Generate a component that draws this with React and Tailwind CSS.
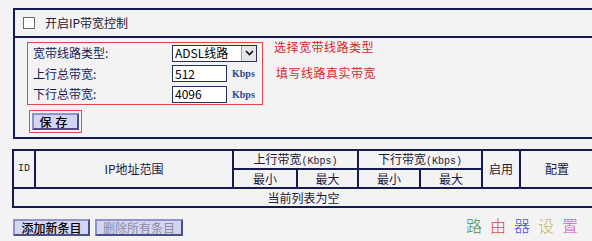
import { useState } from "react";

const cjk = "font-['SimSun','Noto_Sans_CJK_SC',sans-serif]";

function LavButton({ children, disabled, className = "" }) {
	return (
		<button
			type="button"
			className={ `h-[17px] px-[4px] flex items-center justify-center bg-[#d3d5f5] border-2 border-t-[#8f93c9] border-l-[#8f93c9] border-r-[#4b4f86] border-b-[#4b4f86] text-[12px] leading-none ${ disabled ? "text-[#8c8c9c]" : "text-black font-medium" } ${ className }` }
		>
			{ children }
		</button>
	);
}

function Kbps() {
	return <span className="ml-[5px] font-['Liberation_Serif',serif] font-bold text-[10px] text-[#2d4a8a]">Kbps</span>;
}

export default function App() {
	const [ enabled, setEnabled ] = useState(false);
	const [ up, setUp ] = useState("512");
	const [ down, setDown ] = useState("4096");

	const th = "border-2 border-[#141a4e] font-normal text-center p-0 leading-none";

	return (
		<div className={ `w-[592px] h-[241px] overflow-hidden bg-[#f3f3f3] pt-[8px] text-[12px] text-[#1a1a3a] ${ cjk }` }>
			<div className="ml-[13px] w-[600px] border-l-2 border-y-2 border-[#141a4e]">
				<div className="h-[28px] flex items-center border-b-2 border-[#141a4e] pl-[8px]">
					<button
						type="button"
						onClick={ () => setEnabled(!enabled) }
						className="w-[12px] h-[12px] border border-[#6b6b6b] bg-white flex items-center justify-center text-[9px] leading-none"
					>
						{ enabled ? "✓" : "" }
					</button>
					<span className="ml-[10px]">开启IP带宽控制</span>
				</div>
				<div className="h-[99px] pl-[12px] pt-[4px]">
					<div className="flex items-start">
						<div className="w-[236px] border border-[#e2474d] pl-[5px] flex flex-col text-[#1a1a5a]">
							<div className="h-[20px] flex items-center">
								<span className="w-[139px]">宽带线路类型:</span>
								<div className="w-[85px] h-[17px] bg-white border border-[#24315e] flex items-center justify-between text-black">
									<span className="pl-[2px] text-[12px]">ADSL线路</span>
									<span className="w-[15px] h-[15px] bg-[#e6e6ea] border-l border-[#9aa0b8] flex items-center justify-center">
										<svg width="9" height="6" viewBox="0 0 9 6"><path d="M1 1 L4.5 4.5 L8 1" fill="none" stroke="#111" strokeWidth="1.6" /></svg>
									</span>
								</div>
							</div>
							<div className="h-[21px] flex items-center">
								<span className="w-[139px]">上行总带宽:</span>
								<input value={ up } onChange={ e => setUp(e.target.value) } className="w-[55px] h-[17px] bg-white border border-[#24315e] px-[2px] text-[12px] text-black outline-none" />
								<Kbps />
							</div>
							<div className="h-[20px] flex items-center">
								<span className="w-[139px]">下行总带宽:</span>
								<input value={ down } onChange={ e => setDown(e.target.value) } className="w-[55px] h-[17px] bg-white border border-[#24315e] px-[2px] text-[12px] text-black outline-none" />
								<Kbps />
							</div>
						</div>
						<div className="ml-[11px] flex flex-col text-[#d42a2a] text-[12px] tracking-[0.5px]">
							<span className="h-[12px] leading-[12px] mt-[-1px]">选择宽带线路类型</span>
							<span className="h-[12px] leading-[12px] mt-[14px] ml-[2px]">填写线路真实带宽</span>
						</div>
					</div>
					<div className="ml-[2px] mt-[5px] w-fit border border-[#e2474d] p-[2px]">
						<LavButton className="w-[47px] tracking-[4px]">保存</LavButton>
					</div>
				</div>
			</div>

			<table className="ml-[12px] mt-[10px] border-collapse table-fixed w-[581px]">
				<colgroup>
					<col className="w-[22px]" />
					<col className="w-[198px]" />
					<col className="w-[64px]" />
					<col className="w-[61px]" />
					<col className="w-[62px]" />
					<col className="w-[62px]" />
					<col className="w-[38px]" />
					<col className="w-[74px]" />
				</colgroup>
				<thead>
					<tr className="h-[19px]">
						<th rowSpan={ 2 } className={ `${ th } font-['Liberation_Mono',monospace] font-bold text-[10px]` }>ID</th>
						<th rowSpan={ 2 } className={ th }>IP地址范围</th>
						<th colSpan={ 2 } className={ th }>上行带宽<span className="font-['Liberation_Mono',monospace] text-[10px]">(Kbps)</span></th>
						<th colSpan={ 2 } className={ th }>下行带宽<span className="font-['Liberation_Mono',monospace] text-[10px]">(Kbps)</span></th>
						<th rowSpan={ 2 } className={ th }>启用</th>
						<th rowSpan={ 2 } className={ th }>配置</th>
					</tr>
					<tr className="h-[19px]">
						<th className={ th }>最小</th>
						<th className={ th }>最大</th>
						<th className={ th }>最小</th>
						<th className={ th }>最大</th>
					</tr>
				</thead>
				<tbody>
					<tr className="h-[19px]">
						<td colSpan={ 8 } className="border-2 border-[#141a4e] text-center p-0 leading-none">当前列表为空</td>
					</tr>
				</tbody>
			</table>

			<div className="mt-[11px] ml-[13px] flex items-start">
				<LavButton className="w-[77px]">添加新条目</LavButton>
				<LavButton disabled className="ml-[5px] w-[88px] font-normal">删除所有条目</LavButton>
				<div className="ml-auto mr-[14px] mt-[-4px] flex gap-[8px] text-[16px] leading-[20px] font-light">
					<span className="text-[#4f8f50]">路</span>
					<span className="text-[#d8484a]">由</span>
					<span className="text-[#4a58d6]">器</span>
					<span className="text-[#c9b05a]">设</span>
					<span className="text-[#d659c6]">置</span>
				</div>
			</div>
		</div>
	);
}
